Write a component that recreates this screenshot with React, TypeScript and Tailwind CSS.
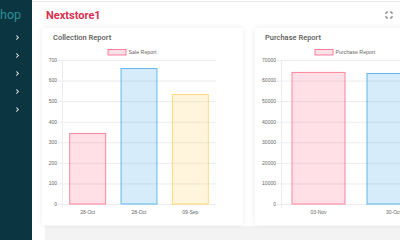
import { ChevronRight, Maximize } from 'lucide-react'

interface Bar {
  label: string
  value: number
  fill: string
  stroke: string
}

interface ChartProps {
  legend: string
  legendX: number
  ticks: number[]
  max: number
  bars: Bar[]
  plotLeft: number
  plotWidth: number
}

const pink = { fill: 'rgba(255,99,132,0.2)', stroke: 'rgb(255,99,132)' }
const blue = { fill: 'rgba(54,162,235,0.2)', stroke: 'rgb(54,162,235)' }
const yellow = { fill: 'rgba(255,206,86,0.2)', stroke: 'rgb(255,206,86)' }

function BarChart({ legend, legendX, ticks, max, bars, plotLeft, plotWidth }: ChartProps) {
  const top = 14
  const bottom = 158
  const h = bottom - top
  const cat = plotWidth / bars.length
  const bw = cat * 0.72
  const y = (v: number) => bottom - (v / max) * h

  return (
    <svg width={201} height={172} className="block" style={{ fontFamily: '"Liberation Sans", Arial, sans-serif' }}>
      <rect x={legendX} y={3.5} width={18} height={5.5} fill={pink.fill} stroke={pink.stroke} strokeWidth={0.8} />
      <text x={legendX + 20.5} y={8.2} fontSize={5.3} fill="#666">
        {legend}
      </text>
      {ticks.map((t) => (
        <g key={t}>
          <line x1={plotLeft - 4} x2={plotLeft + plotWidth} y1={y(t) + 0.5} y2={y(t) + 0.5} stroke="#ececec" strokeWidth={1} />
          <text x={plotLeft - 5} y={y(t) + 1.8} fontSize={5} fill="#666" textAnchor="end">
            {t}
          </text>
        </g>
      ))}
      <line x1={plotLeft + 0.5} x2={plotLeft + 0.5} y1={top} y2={bottom + 4} stroke="#ececec" />
      {bars.map((b, i) => {
        const x = plotLeft + cat * i + (cat - bw) / 2
        return (
          <g key={i}>
            <rect x={x + 0.5} y={y(b.value) + 0.5} width={bw - 1} height={bottom - y(b.value) - 0.5} fill={b.fill} stroke={b.stroke} strokeOpacity={0.75} strokeWidth={1} />
            <text x={plotLeft + cat * i + cat / 2} y={168} fontSize={5} fill="#666" textAnchor="middle">
              {b.label}
            </text>
          </g>
        )
      })}
    </svg>
  )
}

function Card({ title, children, pl }: { title: string; children: React.ReactNode; pl: string }) {
  return (
    <div className="w-[201px] h-[197px] shrink-0 bg-white shadow-[0_0_6px_rgba(0,0,0,0.08)]">
      <div className={`h-[18px] pt-[5px] ${pl} text-[7.5px] font-medium text-[#5a5a5a] leading-[10px]`}>{title}</div>
      {children}
    </div>
  )
}

export default function App() {
  return (
    <div className="w-[400px] h-[240px] flex overflow-hidden bg-white" style={{ fontFamily: 'Roboto, "Liberation Sans", sans-serif' }}>
      <aside className="w-[32px] shrink-0 bg-[#0c3542] overflow-hidden">
        <div className="h-[28px] pt-[6px] text-[12.5px] leading-[18px] text-[#2b8e93] whitespace-nowrap">hop</div>
        <div className="flex flex-col items-end pr-[11px] pt-[6px] gap-[11px]">
          {[0, 1, 2, 3, 4].map((i) => (
            <ChevronRight key={i} size={7} strokeWidth={3.5} className="text-white" />
          ))}
        </div>
      </aside>
      <main className="flex-1 min-w-0 pt-px">
        <header className="h-[27px] border-t border-[#e8e8e8] flex items-center justify-between pl-[14px] pr-[7px]">
          <h1 className="text-[11px] font-bold text-[#dc2f50] leading-none">Nextstore1</h1>
          <Maximize size={8} strokeWidth={2.5} className="text-[#444]" />
        </header>
        <div className="pl-[10px] flex gap-[12px]">
          <Card title="Collection Report" pl="pl-[11px]">
            <BarChart
              legend="Sale Report"
              legendX={66}
              ticks={[0, 100, 200, 300, 400, 500, 600, 700]}
              max={700}
              plotLeft={20}
              plotWidth={154}
              bars={[
                { label: '28-Oct', value: 345, ...pink },
                { label: '28-Oct', value: 661, ...blue },
                { label: '09-Sep', value: 535, ...yellow },
              ]}
            />
          </Card>
          <Card title="Purchase Report" pl="pl-[10px]">
            <BarChart
              legend="Purchase Report"
              legendX={60}
              ticks={[0, 10000, 20000, 30000, 40000, 50000, 60000, 70000]}
              max={70000}
              plotLeft={26}
              plotWidth={150}
              bars={[
                { label: '03-Nov', value: 64200, ...pink },
                { label: '30-Oct', value: 63700, ...blue },
              ]}
            />
          </Card>
        </div>
        <div className="ml-[13px] mt-[1px] h-[20px] bg-[#f3f3f3]" />
      </main>
    </div>
  )
}
